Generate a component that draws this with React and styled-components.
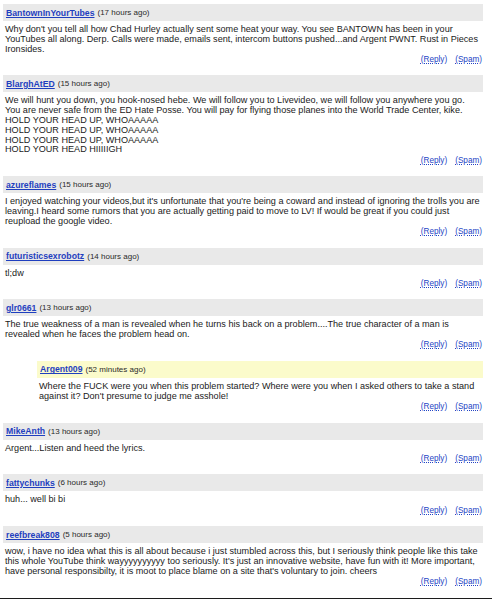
import React from "react";
import styled, { createGlobalStyle } from "styled-components";

const Global = createGlobalStyle`
  html, body { margin: 0; padding: 0; background: #fff; }
  body { font-family: "Liberation Sans", Arial, Helvetica, sans-serif; color: #1a1a1a; }
  #root { width: 492px; height: 599px; overflow: hidden; }
`;

const Page = styled.div`
  display: flex;
  flex-direction: column;
  height: 599px;
  box-sizing: border-box;
`;

const List = styled.div`
  flex: 1;
  display: flex;
  flex-direction: column;
  padding: 4px 9px 0 3px;
`;

const Comment = styled.div`
  display: flex;
  flex-direction: column;
  margin-left: ${(p) => (p.$reply ? "34px" : "0")};
  margin-bottom: 11px;
`;

const Header = styled.div`
  height: 17px;
  display: flex;
  align-items: center;
  gap: 3px;
  padding-left: 3px;
  background: ${(p) => (p.$reply ? "#fbfbcb" : "#e9e9e9")};
`;

const Author = styled.a`
  font-weight: bold;
  font-size: 8.7px;
  color: #1f3fbf;
  text-decoration: underline;
`;

const Time = styled.span`
  font-size: 8px;
  color: #2a2a2a;
`;

const Body = styled.div`
  padding: 4px 0 0 2px;
  font-size: 9.1px;
  line-height: 9.8px;
  white-space: pre-line;
`;

const Actions = styled.div`
  height: 10px;
  display: flex;
  justify-content: flex-end;
  align-items: center;
  gap: 8px;
  padding-right: 1px;
`;

const ActionLink = styled.a`
  font-size: 8.2px;
  color: #2444c4;
  text-decoration: underline dotted;
`;

const BottomBar = styled.div`
  height: 3px;
  background: #1c1c1c;
`;

const comments = [
  {
    author: "BantownInYourTubes",
    time: "17 hours ago",
    text: "Why don't you tell all how Chad Hurley actually sent some heat your way. You see BANTOWN has been in your YouTubes all along. Derp. Calls were made, emails sent, intercom buttons pushed...and Argent PWNT. Rust in Pieces Ironsides.",
  },
  {
    author: "BlarghAtED",
    time: "15 hours ago",
    text: "We will hunt you down, you hook-nosed hebe. We will follow you to Livevideo, we will follow you anywhere you go.\nYou are never safe from the ED Hate Posse. You will pay for flying those planes into the World Trade Center, kike.\nHOLD YOUR HEAD UP, WHOAAAAA\nHOLD YOUR HEAD UP, WHOAAAAA\nHOLD YOUR HEAD UP, WHOAAAAA\nHOLD YOUR HEAD HIIIIIGH",
  },
  {
    author: "azureflames",
    time: "15 hours ago",
    text: "I enjoyed watching your videos,but it's unfortunate that you're being a coward and instead of ignoring the trolls you are leaving.I heard some rumors that you are actually getting paid to move to LV! If would be great if you could just reupload the google video.",
  },
  { author: "futuristicsexrobotz", time: "14 hours ago", text: "tl;dw" },
  {
    author: "glr0661",
    time: "13 hours ago",
    text: "The true weakness of a man is revealed when he turns his back on a problem....The true character of a man is revealed when he faces the problem head on.",
  },
  {
    author: "Argent009",
    time: "52 minutes ago",
    reply: true,
    text: "Where the FUCK were you when this problem started? Where were you when I asked others to take a stand against it? Don't presume to judge me asshole!",
  },
  { author: "MikeAnth", time: "13 hours ago", text: "Argent...Listen and heed the lyrics." },
  { author: "fattychunks", time: "6 hours ago", text: "huh... well bi bi" },
  {
    author: "reefbreak808",
    time: "5 hours ago",
    text: "wow, i have no idea what this is all about because i just stumbled across this, but I seriously think people like this take this whole YouTube think wayyyyyyyyyy too seriously. It's just an innovative website, have fun with it! More important, have personal responsibilty, it is moot to place blame on a site that's voluntary to join. cheers",
  },
];

export default function App() {
  return (
    <>
      <Global />
      <Page>
        <List>
          {comments.map((c) => (
            <Comment key={c.author} $reply={c.reply}>
              <Header $reply={c.reply}>
                <Author href="#">{c.author}</Author>
                <Time>({c.time})</Time>
              </Header>
              <Body>{c.text}</Body>
              <Actions>
                <ActionLink href="#">(Reply)</ActionLink>
                <ActionLink href="#">(Spam)</ActionLink>
              </Actions>
            </Comment>
          ))}
        </List>
        <BottomBar />
      </Page>
    </>
  );
}
